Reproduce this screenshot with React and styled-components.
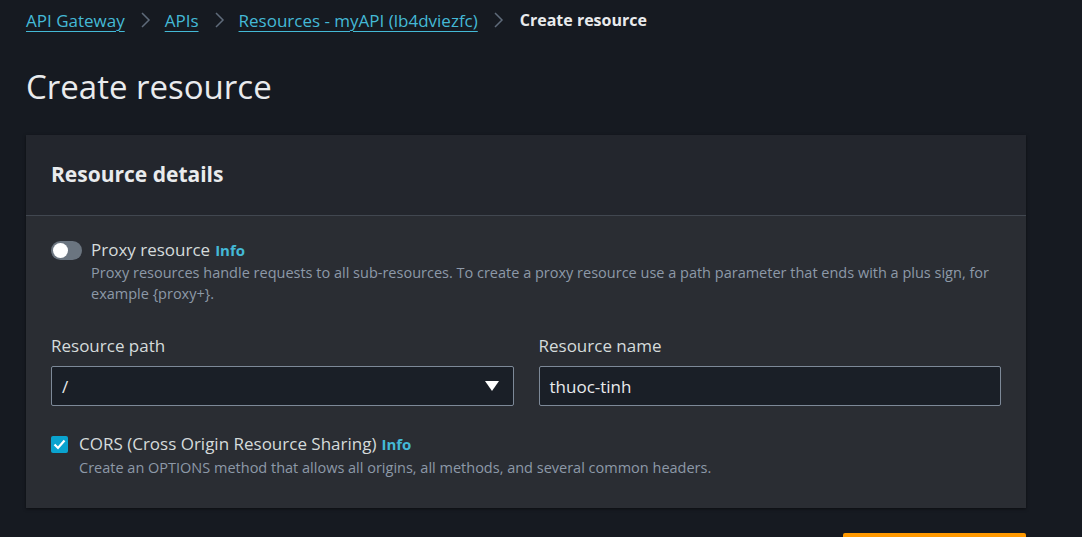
import React from "react";
import styled, { createGlobalStyle } from "styled-components";

const GlobalStyle = createGlobalStyle`
  body {
    margin: 0;
    background: #161a21;
    font-family: "Open Sans", "Liberation Sans", sans-serif;
    color: #d1d5db;
    overflow: hidden;
  }
`;

const Page = styled.div`
  width: 1000px;
  padding: 0 0 0 26px;
`;

const Crumbs = styled.nav`
  height: 40px;
  display: flex;
  align-items: center;
  gap: 14px;
  font-size: 17px;
`;

const CrumbLink = styled.a`
  color: #44b9d6;
  text-decoration: underline;
  text-underline-offset: 4px;
  text-decoration-thickness: 1px;
`;

const CrumbCurrent = styled.span`
  color: #e9ebed;
  font-weight: 700;
  font-size: 16px;
  margin-left: 2px;
`;

const Chevron = styled.svg`
  width: 12px;
  height: 18px;
  flex: none;
`;

const Title = styled.h1`
  margin: 27px 0 28px;
  font-size: 33px;
  line-height: 40px;
  font-weight: 400;
  color: #e9ebed;
`;

const Card = styled.section`
  background: #2a2d33;
  box-shadow: 0 1px 3px rgba(0, 0, 0, 0.5);
`;

const CardHeader = styled.header`
  height: 80px;
  padding: 0 25px;
  display: flex;
  align-items: center;
  background: #23262d;
  border-bottom: 1px solid #414750;
`;

const CardTitle = styled.h2`
  margin: -3px 0 0;
  font-size: 21px;
  font-weight: 700;
  color: #e9ebed;
`;

const CardBody = styled.div`
  padding: 23px 25px 30px;
`;

const OptionRow = styled.div`
  display: flex;
  gap: ${p => p.$gap || 10}px;
  align-items: flex-start;
`;

const OptionText = styled.div`
  display: flex;
  flex-direction: column;
`;

const OptionLabel = styled.div`
  font-size: 17px;
  line-height: 22px;
  color: #d5dbdb;
`;

const Info = styled.a`
  color: #44b9d6;
  font-weight: 700;
  font-size: 15px;
  margin-left: 5px;
`;

const Description = styled.div`
  font-size: 14.5px;
  line-height: 21px;
  color: #8d99a8;
  margin-top: ${p => p.$top ?? 1}px;
`;

const Toggle = styled.span`
  position: relative;
  width: 31px;
  height: 19px;
  margin-top: 2px;
  border-radius: 10px;
  background: #6b7580;
  flex: none;
  &::after {
    content: "";
    position: absolute;
    left: 2px;
    top: 2px;
    width: 15px;
    height: 15px;
    border-radius: 50%;
    background: #ffffff;
  }
`;

const Checkbox = styled.span`
  width: 17px;
  height: 17px;
  margin-top: 3px;
  border-radius: 2px;
  background: #0aa3cf;
  display: flex;
  align-items: center;
  justify-content: center;
  flex: none;
`;

const Fields = styled.div`
  display: grid;
  grid-template-columns: 1fr 1fr;
  gap: 25px;
  margin: 31px 0 27px;
`;

const Field = styled.div`
  display: flex;
  flex-direction: column;
  gap: 9px;
`;

const FieldLabel = styled.label`
  font-size: 17px;
  line-height: 22px;
  color: #d5dbdb;
`;

const InputBox = styled.div`
  height: 40px;
  box-sizing: border-box;
  border: 1px solid #7d8998;
  border-radius: 2px;
  background: #1a1f27;
  padding: 0 10px;
  display: flex;
  align-items: center;
  justify-content: space-between;
  font-size: 17px;
  color: #e9ebed;
`;

const Caret = styled.svg`
  width: 14px;
  height: 10px;
  margin-right: 4px;
`;

const Actions = styled.div`
  display: flex;
  justify-content: flex-end;
  margin-top: 25px;
`;

const PrimaryButton = styled.button`
  width: 183px;
  height: 36px;
  border: none;
  border-radius: 2px;
  background: #ff9900;
  color: #0f1b2a;
  font-family: inherit;
  font-weight: 700;
  font-size: 16px;
`;

const Sep = () => (
  <Chevron viewBox="0 0 12 18">
    <path d="M3 2 L10 9 L3 16" fill="none" stroke="#5f6b7a" strokeWidth="1.5" />
  </Chevron>
);

export default function App() {
  return (
    <>
      <GlobalStyle />
      <Page>
        <Crumbs>
          <CrumbLink>API Gateway</CrumbLink>
          <Sep />
          <CrumbLink>APIs</CrumbLink>
          <Sep />
          <CrumbLink>Resources - myAPI (lb4dviezfc)</CrumbLink>
          <Sep />
          <CrumbCurrent>Create resource</CrumbCurrent>
        </Crumbs>
        <Title>Create resource</Title>
        <Card>
          <CardHeader>
            <CardTitle>Resource details</CardTitle>
          </CardHeader>
          <CardBody>
            <OptionRow $gap={9}>
              <Toggle />
              <OptionText>
                <OptionLabel>
                  Proxy resource<Info>Info</Info>
                </OptionLabel>
                <Description>
                  Proxy resources handle requests to all sub-resources. To create a proxy resource use a path parameter that ends with a plus sign, for example {"{proxy+}"}.
                </Description>
              </OptionText>
            </OptionRow>
            <Fields>
              <Field>
                <FieldLabel>Resource path</FieldLabel>
                <InputBox>
                  <span>/</span>
                  <Caret viewBox="0 0 14 10">
                    <path d="M0 0 H14 L7 10 Z" fill="#ffffff" />
                  </Caret>
                </InputBox>
              </Field>
              <Field>
                <FieldLabel>Resource name</FieldLabel>
                <InputBox>thuoc-tinh</InputBox>
              </Field>
            </Fields>
            <OptionRow $gap={11}>
              <Checkbox>
                <svg width="13" height="11" viewBox="0 0 13 11">
                  <path d="M1.5 5.5 L5 9 L11.5 1.5" fill="none" stroke="#ffffff" strokeWidth="2.2" />
                </svg>
              </Checkbox>
              <OptionText>
                <OptionLabel>
                  CORS (Cross Origin Resource Sharing)<Info>Info</Info>
                </OptionLabel>
                <Description $top={2}>
                  Create an OPTIONS method that allows all origins, all methods, and several common headers.
                </Description>
              </OptionText>
            </OptionRow>
          </CardBody>
        </Card>
        <Actions>
          <PrimaryButton>Create resource</PrimaryButton>
        </Actions>
      </Page>
    </>
  );
}
